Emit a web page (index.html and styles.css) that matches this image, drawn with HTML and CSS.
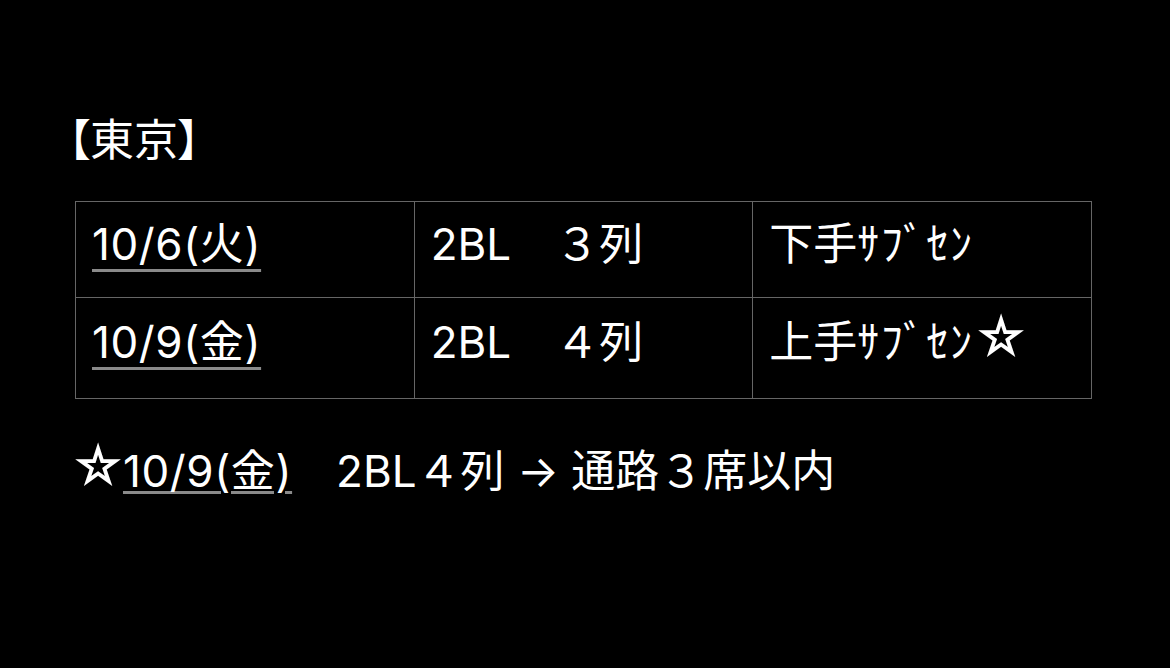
FILE: index.html
```html
<!DOCTYPE html>
<html lang="ja">
<head>
<meta charset="utf-8">
<link rel="stylesheet" href="styles.css">
</head>
<body>
<main class="page">
  <h1 class="title">【東京】</h1>
  <table class="seats">
    <tr class="row row-1">
      <td class="cell"><span class="date">10/6(火)</span></td>
      <td class="cell">2BL　３列</td>
      <td class="cell">下手<span class="kana">ｻﾌﾞｾﾝ</span></td>
    </tr>
    <tr class="row row-2">
      <td class="cell"><span class="date">10/9(金)</span></td>
      <td class="cell">2BL　４列</td>
      <td class="cell">上手<span class="kana">ｻﾌﾞｾﾝ</span><span class="star star-cell">☆</span></td>
    </tr>
  </table>
  <p class="note"><span class="star">☆</span><span class="date-inline">10/9(金)</span>　2BL４列 → 通路３席以内</p>
</main>
</body>
</html>
```
FILE: styles.css
```css
html, body {
  margin: 0;
  padding: 0;
  background: #000;
}
body {
  width: 1170px;
  height: 668px;
  overflow: hidden;
  color: #fff;
  font-family: "Inter", "Noto Sans CJK JP", sans-serif;
  font-size: 44px;
}
.page {
  padding: 110px 0 0 75px;
}
.title {
  margin: 0 0 0 -7px;
  font-size: 44px;
  font-weight: 400;
  line-height: 60px;
  font-feature-settings: "palt";
}
.seats {
  margin-top: 31px;
  width: 1017px;
  border-collapse: collapse;
  table-layout: fixed;
}
.cell {
  border: 1px solid #666;
  padding: 0 0 12px 16px;
  vertical-align: middle;
  line-height: 56px;
  white-space: nowrap;
}
.row-1 .cell { height: 83px; }
.row-2 .cell { height: 88px; }
.kana {
  letter-spacing: 1.6px;
}
.date {
  text-decoration: underline;
  text-decoration-color: #8a8a8a;
  text-decoration-thickness: 3px;
  text-underline-offset: 9px;
  text-decoration-skip-ink: none;
  letter-spacing: 0.6px;
}
.star {
  display: inline-block;
  transform: translate(-2px, -4px) scale(1.2);
}
.star-cell {
  margin-left: 6px;
}
.note {
  margin: 42px 0 0 2px;
  line-height: 60px;
}
.date-inline {
  text-decoration: underline;
  text-decoration-color: #8a8a8a;
  text-decoration-thickness: 3px;
  text-underline-offset: 4px;
  text-decoration-skip-ink: auto;
  letter-spacing: 0.6px;
}
```
